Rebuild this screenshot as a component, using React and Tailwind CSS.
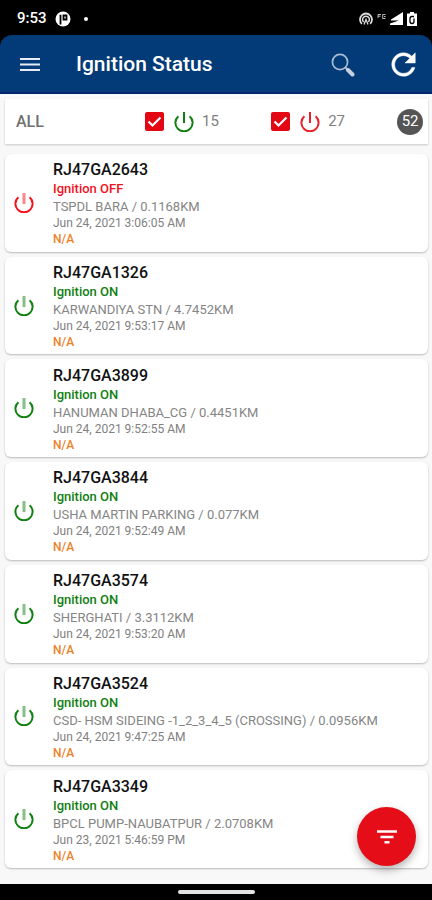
import { useState } from "react";

const vehicles = [
  { id: "RJ47GA2643", on: false, place: "TSPDL BARA / 0.1168KM", time: "Jun 24, 2021 3:06:05 AM" },
  { id: "RJ47GA1326", on: true, place: "KARWANDIYA STN / 4.7452KM", time: "Jun 24, 2021 9:53:17 AM" },
  { id: "RJ47GA3899", on: true, place: "HANUMAN DHABA_CG / 0.4451KM", time: "Jun 24, 2021 9:52:55 AM" },
  { id: "RJ47GA3844", on: true, place: "USHA MARTIN PARKING / 0.077KM", time: "Jun 24, 2021 9:52:49 AM" },
  { id: "RJ47GA3574", on: true, place: "SHERGHATI / 3.3112KM", time: "Jun 24, 2021 9:53:20 AM" },
  { id: "RJ47GA3524", on: true, place: "CSD- HSM SIDEING -1_2_3_4_5 (CROSSING) / 0.0956KM", time: "Jun 24, 2021 9:47:25 AM" },
  { id: "RJ47GA3349", on: true, place: "BPCL PUMP-NAUBATPUR / 2.0708KM", time: "Jun 23, 2021 5:46:59 PM" },
];

const PowerIcon = ({ faded, className }) => (
  <svg viewBox="0 0 20 20" fill="none" stroke="currentColor" className={className}>
    <path d="M4.4 4.2A8.6 8.6 0 1 0 15.6 4.2" strokeWidth="2" />
    <path d="M10 0V11" strokeWidth={faded ? 3 : 2} opacity={faded ? 0.5 : 1} />
  </svg>
);

const StatusBar = () => (
  <div className="flex h-[35px] items-center bg-black pl-[17px] pr-[15px] pt-[2px] text-white">
    <span className="text-[15px] font-medium">9:53</span>
    <svg viewBox="0 0 16 16" className="ml-2 size-4">
      <circle cx="8" cy="8" r="7.5" fill="#fff" />
      <path d="M5.5 13.5V3.8M8.5 4.5h3v4h-3z" fill="none" stroke="#000" strokeWidth="1.8" />
    </svg>
    <span className="ml-[13px] size-1 rounded-full bg-white" />
    <div className="ml-auto flex items-center gap-1">
      <svg viewBox="0 0 14 13" fill="none" stroke="#ddd" className="h-[13px] w-[14px]">
        <path d="M2.8 11.8A6 6 0 1 1 11.2 11.8" strokeWidth="1.8" />
        <path d="M4.6 10A3.4 3.4 0 1 1 9.400 10" strokeWidth="1.500" />
        <path d="M5 12.500L7 7.500L9 12.500" strokeWidth="1.300" />
      </svg>
      <svg viewBox="0 0 9 12" fill="none" stroke="#bbb" className="h-3 w-[9px]">
        <path d="M1 5V1.5h3M1 3.2h2.5M8.5 1.5H5.7v4h2.8M7 3.5h1.5" />
      </svg>
      <svg viewBox="0 0 13 13" className="size-[13px]">
        <path d="M13 0V13H0V11.500L9 8.500H1V7.500z" fill="#fff" />
      </svg>
      <svg viewBox="0 0 10 14" className="h-[14px] w-[10px]">
        <path d="M3 0h4v1.500h3V14H0V1.500h3z" fill="#fff" />
        <path d="M7 4.500H5A2 2 0 0 0 3 6.500v3A2 2 0 0 0 5 11.500A2 2 0 0 0 7 9.500V6.500" fill="none" stroke="#000" strokeWidth="1.300" />
      </svg>
    </div>
  </div>
);

const Header = () => (
  <div className="bg-black">
    <header className="flex h-[59px] items-center rounded-t-xl border-b-2 border-[#00246b] bg-[#033b78] pl-5 pr-4 pt-[2px] text-white">
      <button aria-label="Menu">
        <svg viewBox="0 0 20 16" className="h-4 w-5">
          <path d="M0 2H20M0 7.500H20M0 13H20" stroke="#e6ebf5" strokeWidth="2.200" />
        </svg>
      </button>
      <h1 className="ml-9 text-[21px] font-medium">Ignition Status</h1>
      <button aria-label="Search" className="ml-auto">
        <svg viewBox="0 0 24 24" fill="none" className="size-6">
          <circle cx="9" cy="9" r="7.600" stroke="#a9bbd2" strokeWidth="1.700" />
          <path d="M14.500 14.500L17 17" stroke="#a9bbd2" strokeWidth="2" />
          <path d="M17 17L21.500 21.500" stroke="#c6d0de" strokeWidth="4" strokeLinecap="round" />
        </svg>
      </button>
      <button aria-label="Refresh" className="ml-9">
        <svg viewBox="3.500 3.500 17 17" fill="#fff" stroke="#fff" strokeWidth="0.300" className="size-[25px]">
          <path d="M17.650 6.350C16.200 4.900 14.210 4 12 4c-4.420 0-7.990 3.580-7.990 8s3.570 8 7.990 8c3.730 0 6.840-2.550 7.730-6h-2.080c-.82 2.330-3.040 4-5.650 4-3.310 0-6-2.690-6-6s2.690-6 6-6c1.660 0 3.140.69 4.220 1.780L13 11h7V4l-2.350 2.350z" />
        </svg>
      </button>
    </header>
  </div>
);

const FilterToggle = ({ label, count, color, checked, onChange }) => (
  <label className="flex w-[127px] items-center">
    <span className="relative size-[19px]">
      <input
        type="checkbox"
        aria-label={label}
        checked={checked}
        onChange={(e) => onChange(e.target.checked)}
        className="peer block size-[19px] appearance-none rounded-xs border-2 border-[#e30613] checked:bg-[#e30613]"
      />
      <svg viewBox="0 0 19 19" className="pointer-events-none absolute inset-0 hidden peer-checked:block">
        <path d="M3.500 9.500L7.500 13.500L15.500 5.500" fill="none" stroke="#fff" strokeWidth="2.200" />
      </svg>
    </span>
    <span className={color}>
      <PowerIcon className="ml-[10px] size-5" />
    </span>
    <span className="ml-2 text-[15px] text-[#808080]">{count}</span>
  </label>
);

const VehicleCard = ({ vehicle }) => {
  const color = vehicle.on ? "text-[#118011]" : "text-[#f5101c]";

  return (
    <li className="flex items-center rounded-md bg-white pl-[9px] shadow-[0_1px_2px_rgba(0,0,0,0.25)]">
      <span className={color}>
        <PowerIcon faded className="size-5" />
      </span>
      <div className="ml-[19px] pb-1 pt-[6px]">
        <h2 className="text-base font-medium leading-5 text-[#111]">{vehicle.id}</h2>
        <p className={`text-[13px] font-medium leading-[18px] ${color}`}>{vehicle.on ? "Ignition ON" : "Ignition OFF"}</p>
        <p className="text-[13px] leading-[18px] text-[#858585]">{vehicle.place}</p>
        <p className="text-xs leading-[15px] text-[#808080]">{vehicle.time}</p>
        <p className="text-xs font-medium leading-4 text-[#ec8228]">N/A</p>
      </div>
    </li>
  );
};

const App = () => {
  const [showOn, setShowOn] = useState(true);
  const [showOff, setShowOff] = useState(true);

  const visible = vehicles.filter((v) => (v.on ? showOn : showOff));

  return (
    <div className="relative flex min-h-screen flex-col bg-[#f8f8f8] font-[Roboto,sans-serif]">
      <StatusBar />
      <Header />

      {/* Filters */}
      <section className="ml-[5px] mr-1 mt-[5px] flex h-[45px] items-center bg-white pl-[11px] pr-[5px] shadow-[0_1px_2px_rgba(0,0,0,0.2)]">
        <span className="w-[130px] text-base font-medium text-[#707070]">ALL</span>
        <FilterToggle label="Ignition on" count={15} color="text-[#118011]" checked={showOn} onChange={setShowOn} />
        <FilterToggle label="Ignition off" count={27} color="text-[#e8202a]" checked={showOff} onChange={setShowOff} />
        <span className="ml-auto flex size-[26px] items-center justify-center rounded-full bg-[#555] text-[15px] text-white">
          52
        </span>
      </section>

      {/* Vehicles */}
      <ul className="mb-4 ml-[5px] mr-1 mt-[10px] grid flex-1 grid-rows-7 gap-[5px]">
        {visible.map((v) => (
          <VehicleCard key={v.id} vehicle={v} />
        ))}
      </ul>

      <button
        aria-label="Filter list"
        className="absolute bottom-[34px] right-4 flex size-[59px] items-center justify-center rounded-full bg-[#e50d17] shadow-[0_4px_8px_rgba(0,0,0,0.3)]"
      >
        <svg viewBox="0 0 20 14" className="h-[14px] w-5">
          <path d="M0 1.500H20M3.500 7H16.500M7.500 12.300H12.500" stroke="#fff" strokeWidth="2.600" />
        </svg>
      </button>

      <div className="flex h-4 items-center justify-center bg-black">
        <span className="h-1 w-[77px] rounded-full bg-[#e4e4e4]" />
      </div>
    </div>
  );
};

export default App;
